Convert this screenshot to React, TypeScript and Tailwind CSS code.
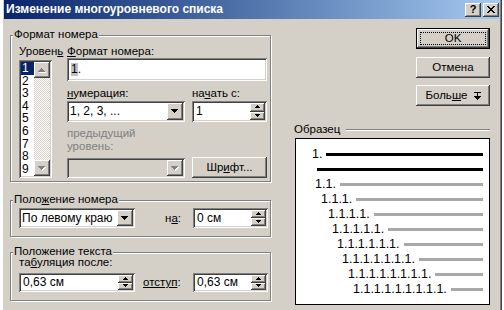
import type { ReactNode } from "react";

const raised =
  "shadow-[inset_-1px_-1px_#404040,inset_1px_1px_#ffffff,inset_-2px_-2px_#808080,inset_2px_2px_#d4d0c8]";
const sunken =
  "shadow-[inset_1px_1px_#808080,inset_-1px_-1px_#ffffff,inset_2px_2px_#404040,inset_-2px_-2px_#d4d0c8]";

// pixel triangle, rows 7/5/3/1 or 5/3/1
function Arrow({ dir, small = false, disabled = false }: { dir: "up" | "down"; small?: boolean; disabled?: boolean }) {
  const w = small ? 5 : 7;
  const rows = small ? [5, 3, 1] : [7, 5, 3, 1];
  const h = rows.length;
  const rects = rows.map((rw, i) => {
    const y = dir === "down" ? i : h - 1 - i;
    return { x: (w - rw) / 2, y, w: rw };
  });
  return (
    <svg width={w + 1} height={h + 1} shapeRendering="crispEdges" className="block">
      {disabled && rects.map((r, i) => <rect key={"s" + i} x={r.x + 1} y={r.y + 1} width={r.w} height={1} fill="#ffffff" />)}
      {rects.map((r, i) => (
        <rect key={i} x={r.x} y={r.y} width={r.w} height={1} fill={disabled ? "#808080" : "#000000"} />
      ))}
    </svg>
  );
}

function GroupBox({ label, className, children }: { label: ReactNode; className: string; children: ReactNode }) {
  return (
    <div className={`relative border border-[#808080] shadow-[inset_1px_1px_#ffffff,1px_1px_#ffffff] ${className}`}>
      <span className="absolute left-[2px] -top-[8px] px-[1px] bg-[#d4d0c8] leading-[13px] whitespace-nowrap">{label}</span>
      {children}
    </div>
  );
}

function Combo({ text, className, disabled = false }: { text?: string; className: string; disabled?: boolean }) {
  return (
    <div className={`${sunken} ${disabled ? "bg-[#d4d0c8]" : "bg-white"} flex items-stretch p-[2px] ${className}`}>
      <div className="flex-1 flex items-center pl-[1px] text-[12px] whitespace-nowrap overflow-hidden">{text}</div>
      <div className={`${raised} bg-[#d4d0c8] w-[16px] flex items-center justify-center`}>
        <Arrow dir="down" disabled={disabled} />
      </div>
    </div>
  );
}

function Spin({ text, className }: { text: string; className: string }) {
  return (
    <div className={`${sunken} bg-white flex items-stretch p-[2px] ${className}`}>
      <div className="flex-1 flex items-center pl-[2px] text-[12px] whitespace-nowrap">{text}</div>
      <div className="w-[15px] flex flex-col">
        <div className={`${raised} bg-[#d4d0c8] flex-1 flex items-center justify-center`}>
          <Arrow dir="up" small />
        </div>
        <div className={`${raised} bg-[#d4d0c8] flex-1 flex items-center justify-center`}>
          <Arrow dir="down" small />
        </div>
      </div>
    </div>
  );
}

function Button({ children, className, isDefault = false }: { children: ReactNode; className: string; isDefault?: boolean }) {
  if (isDefault) {
    return (
      <div className={`border border-black ${className} flex`}>
        <div className={`${raised} bg-[#d4d0c8] flex-1 p-[3px] flex`}>
          <div className="flex-1 border border-dotted border-black flex items-center justify-center">{children}</div>
        </div>
      </div>
    );
  }
  return <div className={`${raised} bg-[#d4d0c8] flex items-center justify-center ${className}`}>{children}</div>;
}

const levels = ["1", "2", "3", "4", "5", "6", "7", "8", "9"];

const previewRows = [
  { label: "1.1.", pad: "pl-[19px]" },
  { label: "1.1.1.", pad: "pl-[25px]" },
  { label: "1.1.1.1.", pad: "pl-[32px]" },
  { label: "1.1.1.1.1.", pad: "pl-[36px]" },
  { label: "1.1.1.1.1.1.", pad: "pl-[41px]" },
  { label: "1.1.1.1.1.1.1.", pad: "pl-[46px]" },
  { label: "1.1.1.1.1.1.1.1.", pad: "pl-[52px]" },
  { label: "1.1.1.1.1.1.1.1.1.", pad: "pl-[57px]" },
];

export default function App() {
  return (
    <div className="w-[504px] h-[310px] flex bg-white overflow-hidden font-['Liberation_Sans',Arial,sans-serif] text-[11.5px] leading-[13px] text-black select-none">
      <div className="w-[3px] shrink-0 bg-white" />

      {/* window */}
      <div className="w-[497px] shrink-0 flex flex-col bg-[#d4d0c8]">
        {/* title bar */}
        <div className="ml-[1px] h-[19px] shrink-0 flex items-center bg-gradient-to-r from-[#0a246a] to-[#a6caf0] pl-[2px] pr-[1px]">
          <span className="text-white font-bold text-[12px] whitespace-nowrap">Изменение многоуровневого списка</span>
          <div className="ml-auto flex gap-[2px]">
            <div className={`${raised} bg-[#d4d0c8] w-[16px] h-[14px] flex items-center justify-center font-bold text-[11px] leading-none`}>
              ?
            </div>
            <div className={`${raised} bg-[#d4d0c8] w-[16px] h-[14px] flex items-center justify-center`}>
              <svg width="8" height="7" shapeRendering="crispEdges">
                <path d="M0 0h2v1H0zM6 0h2v1H6zM1 1h2v1H1zM5 1h2v1H5zM2 2h4v1H2zM3 3h2v1H3zM2 4h4v1H2zM1 5h2v1H1zM5 5h2v1H5zM0 6h2v1H0zM6 6h2v1H6z" fill="#000" />
              </svg>
            </div>
          </div>
        </div>

        {/* body */}
        <div className="flex flex-1">
          {/* left column */}
          <div className="ml-[7px] w-[261px] shrink-0 flex flex-col">
            <GroupBox label="Формат номера" className="mt-[16px] h-[147px]">
              <div className="flex pt-[9px] pl-[8px]">
                <div className="w-[33px] flex flex-col">
                  <div className="h-[13px] whitespace-nowrap">
                    Уровен<u>ь</u>
                  </div>
                  <div className={`${sunken} bg-white mt-[2px] h-[118px] p-[2px] flex`}>
                    <div className="w-[13px] flex flex-col overflow-hidden text-[12px]">
                      {levels.map((l, i) => (
                        <div key={l} className={`h-[12.6px] shrink-0 pl-[1px] leading-[12.6px] ${i === 0 ? "bg-[#0a246a] text-white" : ""}`}>
                          {l}
                        </div>
                      ))}
                    </div>
                    <div className="w-[16px] flex flex-col bg-[repeating-conic-gradient(#ffffff_0_25%,#d4d0c8_0_50%)] bg-[length:2px_2px]">
                      <div className={`${raised} bg-[#d4d0c8] h-[16px] flex items-center justify-center`}>
                        <Arrow dir="up" disabled />
                      </div>
                      <div className="flex-1" />
                      <div className={`${raised} bg-[#d4d0c8] h-[16px] flex items-center justify-center`}>
                        <Arrow dir="down" disabled />
                      </div>
                    </div>
                  </div>
                </div>

                <div className="ml-[15px] w-[200px] flex flex-col">
                  <div className="h-[13px]">
                    <u>Ф</u>ормат номера:
                  </div>
                  <div className={`${sunken} bg-white h-[23px] flex items-center pl-[4px] text-[12px]`}>
                    <span className="bg-[#c0c0c0]">1</span>.
                  </div>
                  <div className="mt-[6px] flex justify-between">
                    <div className="flex flex-col w-[118px]">
                      <div className="h-[13px]">
                        <u>н</u>умерация:
                      </div>
                      <Combo text="1, 2, 3, ..." className="mt-[1px] h-[21px]" />
                    </div>
                    <div className="flex flex-col w-[75px]">
                      <div className="h-[13px]">
                        на<u>ч</u>ать с:
                      </div>
                      <Spin text="1" className="mt-[1px] h-[21px]" />
                    </div>
                  </div>
                  <div className="mt-[5px] flex justify-between items-end">
                    <div className="flex flex-col w-[118px]">
                      <div className="text-[#808080] leading-[13px]">
                        предыдущий
                        <br />
                        уровень:
                      </div>
                      <Combo className="mt-[5px] h-[20px]" disabled />
                    </div>
                    <Button className="w-[75px] h-[21px]">
                      Шр<u>и</u>фт...
                    </Button>
                  </div>
                </div>
              </div>
            </GroupBox>

            <GroupBox
              label={
                <>
                  Поло<u>ж</u>ение номера
                </>
              }
              className="mt-[18px] h-[37px]"
            >
              <div className="flex items-center pt-[7px] pl-[8px] pr-[2px]">
                <Combo text="По левому краю" className="w-[116px] h-[20px]" />
                <div className="flex-1" />
                <div className="mr-[12px]">
                  н<u>а</u>:
                </div>
                <Spin text="0 см" className="w-[75px] h-[20px]" />
              </div>
            </GroupBox>

            <GroupBox label="Положение текста" className="mt-[15px] h-[49px]">
              <div className="flex flex-col pt-[3px] pl-[8px] pr-[2px]">
                <div className="h-[13px]">
                  та<u>б</u>уляция после:
                </div>
                <div className="mt-[4px] flex items-center">
                  <Spin text="0,63 см" className="w-[116px] h-[19px]" />
                  <div className="ml-[8px]">
                    <u>отступ</u>:
                  </div>
                  <div className="flex-1" />
                  <Spin text="0,63 см" className="w-[75px] h-[19px]" />
                </div>
              </div>
            </GroupBox>
          </div>

          {/* right column */}
          <div className="flex-1 flex flex-col items-end pr-[10px]">
            <Button isDefault className="mt-[9px] w-[74px] h-[21px]">
              OK
            </Button>
            <Button className="mt-[8px] w-[74px] h-[21px]">Отмена</Button>
            <Button className="mt-[7px] w-[74px] h-[21px]">
              <span>
                Боль<u>ш</u>е
              </span>
              <svg width="7" height="8" className="ml-[6px]" shapeRendering="crispEdges">
                <path d="M0 0h7v1H0zM3 1h1v3H3zM0 4h7v1H0zM1 5h5v1H1zM2 6h3v1H2zM3 7h1v1H3z" fill="#000" />
              </svg>
            </Button>

            <div className="mt-[17px] w-[196px] flex flex-col items-end">
              <div className="w-full flex items-center h-[13px]">
                <span className="whitespace-nowrap">Образец</span>
                <div className="ml-[6px] flex-1 h-[2px] border-t border-[#808080] border-b border-b-white" />
              </div>
              <div className="mt-[2px] w-[195px] h-[167px] bg-white border border-black flex flex-col pt-[8px] pr-[6px] text-[12.5px] leading-[15px]">
                <div className="h-[15px] flex items-center pl-[16px]">
                  <span>1.</span>
                  <div className="ml-[4px] flex-1 h-[3px] bg-black" />
                </div>
                <div className="h-[15px] flex items-center pl-[21px]">
                  <div className="flex-1 h-[3px] bg-black" />
                </div>
                {previewRows.map(r => (
                  <div key={r.label} className={`h-[15px] flex items-center ${r.pad}`}>
                    <span className="whitespace-nowrap">{r.label}</span>
                    <div className="ml-[4px] flex-1 h-[3px] bg-[#a8a8a8]" />
                  </div>
                ))}
              </div>
            </div>
          </div>
        </div>
      </div>

      <div className="w-[1px] shrink-0 bg-[#808080]" />
      <div className="w-[1px] shrink-0 bg-[#404040]" />
      <div className="w-[2px] shrink-0 bg-white" />
    </div>
  );
}
